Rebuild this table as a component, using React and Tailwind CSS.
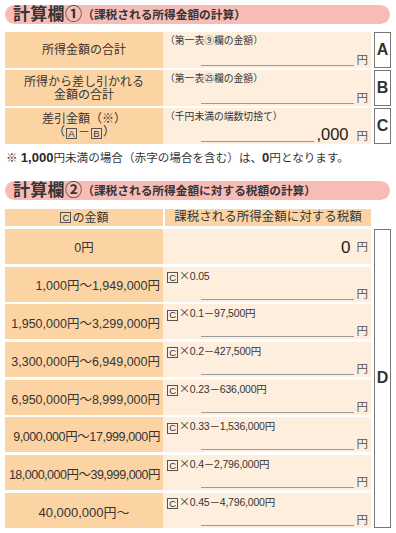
import React from "react";

const FONT = "font-['Liberation_Sans','Noto_Sans_CJK_JP',sans-serif]";

function Boxed({ ch }) {
  return (
    <span className="inline-flex items-center justify-center border border-[#555] w-[11px] h-[11px] text-[9.5px] leading-none align-[-1px] mx-[1px] font-['Liberation_Sans',sans-serif]">
      {ch}
    </span>
  );
}

function Header({ num, sub }) {
  return (
    <div className="w-[385px] h-[19px] rounded-full bg-[#f8bcb7] flex items-center pl-[8px] whitespace-nowrap">
      <span className="text-[17px] font-bold leading-none tracking-[0.3px]">計算欄{num}</span>
      <span className="text-[11.7px] font-bold leading-none">{sub}</span>
    </div>
  );
}

function Blank() {
  return (
    <div className="flex items-end pl-[38px] pr-[3px]">
      <div className="flex-1 border-b border-[#9a9a9a] mb-[1px]" />
      <span className="text-[11.5px] leading-[13px] ml-[3px] text-[#555]">円</span>
    </div>
  );
}

function BoxLetter({ ch, h }) {
  return (
    <div className={`w-[17px] ${h} border border-[#777] bg-white flex items-center justify-center`}>
      <span className="text-[16px] font-bold leading-none text-[#333]">{ch}</span>
    </div>
  );
}

const rows2 = [
  { l: "1,000円～1,949,000円", r: "0.05", tr: "tracking-[0px]" },
  { l: "1,950,000円～3,299,000円", r: "0.1－97,500円", tr: "tracking-[0px]" },
  { l: "3,300,000円～6,949,000円", r: "0.2－427,500円", tr: "tracking-[0px]" },
  { l: "6,950,000円～8,999,000円", r: "0.23－636,000円", tr: "tracking-[0px]" },
  { l: "9,000,000円～17,999,000円", r: "0.33－1,536,000円", tr: "tracking-[-0.4px]" },
  { l: "18,000,000円～39,999,000円", r: "0.4－2,796,000円", tr: "tracking-[-0.5px]" },
  { l: "40,000,000円～", r: "0.45－4,796,000円", tr: "tracking-[0px]", center: true },
];

export default function App() {
  return (
    <div className={`w-[396px] h-[533px] bg-white text-[#353535] ${FONT} pl-[5px] pt-[5px] overflow-hidden`}>
      <Header num="①" sub="（課税される所得金額の計算）" />

      {/* Table 1 */}
      <div className="mt-[8px] flex gap-[3px]">
        <div className="w-[366px] flex flex-col gap-[2px]">
          <div className="h-[36px] flex">
            <div className="w-[158px] bg-[#fcd4a4] flex items-center justify-center text-[12px] leading-[13px]">
              所得金額の合計
            </div>
            <div className="flex-1 bg-[#fdeedd] flex flex-col justify-between pt-[3px] pb-[1px]">
              <div className="text-[9.8px] leading-[12px] pl-[2px]">（第一表⑨欄の金額）</div>
              <Blank />
            </div>
          </div>
          <div className="h-[36px] flex">
            <div className="w-[158px] bg-[#fcd4a4] flex flex-col items-center justify-center text-[12px] leading-[13px] pt-[1px]">
              <span>所得から差し引かれる</span>
              <span>金額の合計</span>
            </div>
            <div className="flex-1 bg-[#fdeedd] flex flex-col justify-between pt-[3px] pb-[1px]">
              <div className="text-[9.8px] leading-[12px] pl-[2px]">（第一表㉕欄の金額）</div>
              <Blank />
            </div>
          </div>
          <div className="h-[36px] flex">
            <div className="w-[158px] bg-[#fcd4a4] flex flex-col items-center justify-center text-[12px] leading-[13px]">
              <span>差引金額（※）</span>
              <span>
                （<Boxed ch="A" />－<Boxed ch="B" />）
              </span>
            </div>
            <div className="flex-1 bg-[#fdeedd] flex flex-col justify-between pt-[3px] pb-[1px]">
              <div className="text-[9.8px] leading-[12px] pl-[2px]">（千円未満の端数切捨て）</div>
              <div className="flex items-end pl-[38px] pr-[3px]">
                <div className="w-[113px] border-b border-[#9a9a9a] mb-[1px]" />
                <span className="flex-1 text-right text-[16.5px] leading-[17px] pr-[8px] text-[#222]">,000</span>
                <span className="text-[11.5px] leading-[13px] text-[#555]">円</span>
              </div>
            </div>
          </div>
        </div>
        <div className="flex flex-col gap-[2px]">
          <BoxLetter ch="A" h="h-[36px]" />
          <BoxLetter ch="B" h="h-[36px]" />
          <BoxLetter ch="C" h="h-[36px]" />
        </div>
      </div>

      <div className="mt-[6px] pl-[1px] text-[11.6px] leading-[16px] whitespace-nowrap">
        ※ <span className="text-[13px] font-bold text-[#2a2a2a]">1,000</span>円未満の場合（赤字の場合を含む）は、<span className="text-[13px] font-bold text-[#2a2a2a]">0</span>円となります。
      </div>

      <div className="mt-[15px]">
        <Header num="②" sub="（課税される所得金額に対する税額の計算）" />
      </div>

      {/* Table 2 */}
      <div className="mt-[9px] flex gap-[2px] h-[17px]">
        <div className="w-[158px] bg-[#fcd4a4] flex items-center justify-center text-[12px] leading-none">
          <Boxed ch="C" />の金額
        </div>
        <div className="w-[206px] bg-[#fcd4a4] flex items-center justify-center text-[12.5px] leading-none">
          課税される所得金額に対する税額
        </div>
      </div>
      <div className="mt-[3px] flex gap-[3px]">
        <div className="w-[366px] flex flex-col gap-[2.7px]">
          <div className="h-[35px] flex">
            <div className="w-[158px] bg-[#fcd4a4] flex items-center justify-center text-[12.5px] leading-none pt-[3px]">
              0円
            </div>
            <div className="flex-1 bg-[#fdeedd] flex items-center justify-end pr-[3px] pt-[2px]">
              <span className="text-[17px] leading-none text-[#222] mr-[6px]">0</span>
              <span className="text-[11.5px] leading-none text-[#555]">円</span>
            </div>
          </div>
          {rows2.map((r, i) => (
            <div key={i} className="h-[35px] flex">
              <div
                className={`w-[158px] bg-[#fcd4a4] flex items-center ${r.center ? "justify-center text-[13px]" : "justify-end pr-[3px] text-[12.5px]"} ${r.tr} leading-none pt-[5px] whitespace-nowrap`}
              >
                {r.l}
              </div>
              <div className="flex-1 bg-[#fdeedd] flex flex-col justify-between pt-[2px] pb-[1px]">
                <div className="text-[10.5px] leading-[12px] pl-[3px] tracking-[-0.2px] whitespace-nowrap">
                  <Boxed ch="C" />
                  <span className="font-['Noto_Sans_CJK_JP',sans-serif] text-[11px]">×</span>
                  {r.r}
                </div>
                <Blank />
              </div>
            </div>
          ))}
        </div>
        <BoxLetter ch="D" h="h-auto" />
      </div>
    </div>
  );
}
